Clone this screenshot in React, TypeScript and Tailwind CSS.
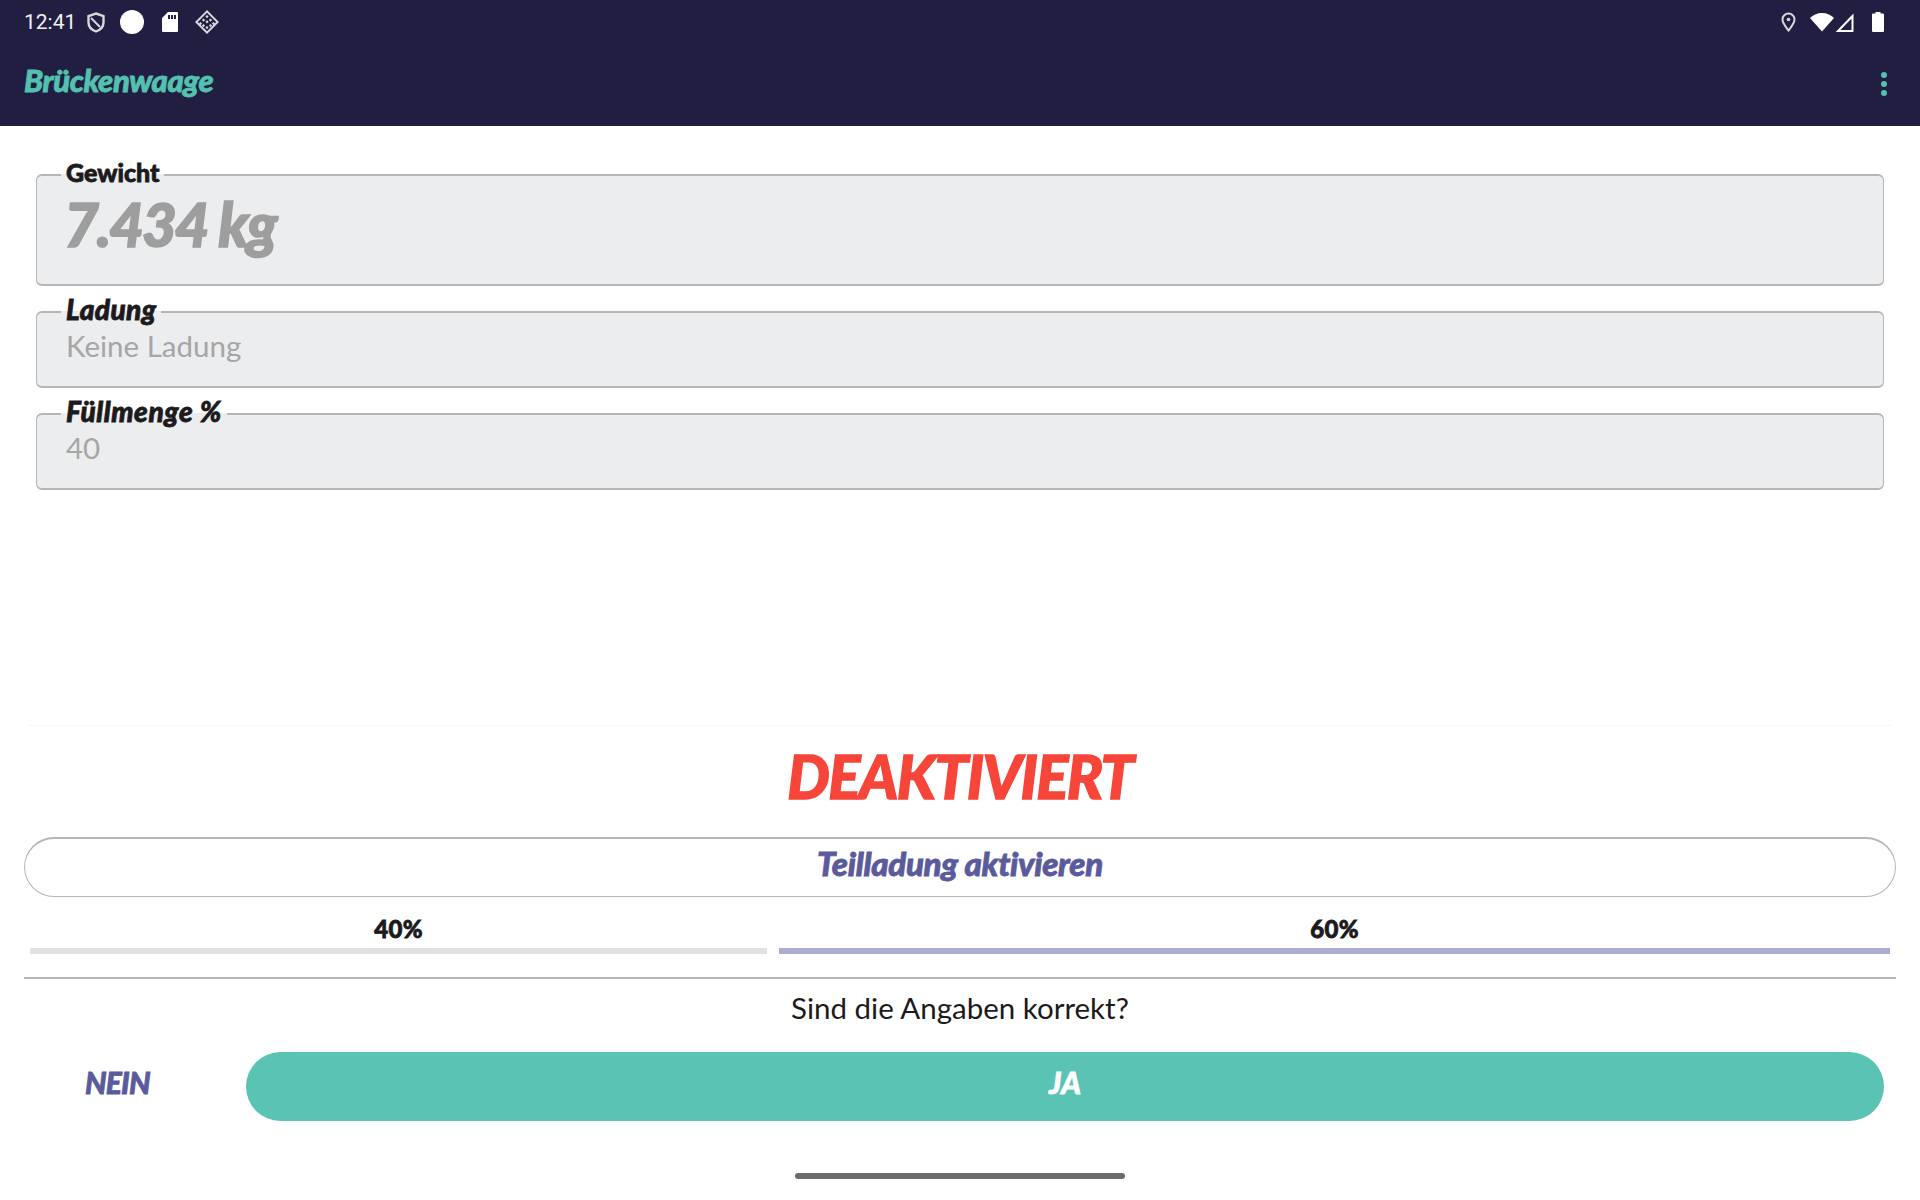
const lato = "font-['Lato','Liberation_Sans',sans-serif]";
const heavy = "[-webkit-text-stroke:0.8px_currentColor]";

function Field({ label, value, upright, big, h, labelSize }: { label: string; value: string; upright?: boolean; big?: boolean; h: string; labelSize: string }) {
  return (
    <fieldset className={`${h} rounded-md border-y-2 border-x-[1.5px] border-[#b6b6b6] bg-[#ecedef] px-[29px]`}>
      <legend className={`ml-[-5px] px-[5px] ${labelSize} font-black text-[#1c1a1c] ${heavy} ${upright ? "" : "italic"}`}>
        <span className="mb-[6px] block leading-[30px]">{label}</span>
      </legend>
      {big ? (
        <div className="ml-[-2px] mt-[-4px] text-[60px] leading-[70px] font-black italic tracking-[-2px] text-[#9e9e9e] [-webkit-text-stroke:1.6px_currentColor]">{value}</div>
      ) : (
        <div className="mt-[-4px] text-[29.5px] leading-[40px] text-[#a6a6a6]">{value}</div>
      )}
    </fieldset>
  );
}

function Icons() {
  return (
    <div className="flex h-[44px] items-center pl-[24px] pr-[36px] text-[#f0f0f0]">
      <span className="w-[63px] font-['Roboto',sans-serif] text-[21px] leading-none">12:41</span>
      <svg width="18" height="21" viewBox="0 0 18 21" fill="none" stroke="#d8d8dc" strokeWidth="2.4">
        <path d="M9 1.5 16.5 4v6.5c0 4.2-3.2 7.4-7.5 9-4.3-1.6-7.5-4.8-7.5-9V4z" />
        <path d="M4 6l9 9" strokeWidth="2" />
      </svg>
      <span className="ml-[15px] h-[24px] w-[24px] rounded-full bg-white" />
      <svg className="ml-[18px]" width="16" height="20" viewBox="0 0 16 20">
        <path fillRule="evenodd" fill="#fff" d="M6 0h9a1 1 0 0 1 1 1v18a1 1 0 0 1-1 1H1a1 1 0 0 1-1-1V6zM6 3v4h2V3zM9 3v4h2V3zM12 3v4h2V3z" />
      </svg>
      <svg className="ml-[17px]" width="24" height="24" viewBox="0 0 24 24" fill="#d8d8dc">
        <path fillRule="evenodd" d="M12 0 24 12 12 24 0 12zM12 2.8 2.8 12 12 21.2 21.2 12z" />
        <path d="M12 5l1.6 1.6L12 8.2l-1.6-1.6zM8.5 8.5l1.6 1.6-1.6 1.6-1.6-1.6zM15.5 8.5l1.6 1.6-1.6 1.6-1.6-1.6zM12 10.2l1.6 1.6-1.6 1.6-1.6-1.6zM5.5 12l1.6 1.6-1.6 1.6L4 13.6zM18.5 12l1.6 1.6-1.6 1.6-1.6-1.6zM8.5 14l1.6 1.6-1.6 1.6-1.6-1.6zM15.5 14l1.6 1.6-1.6 1.6-1.6-1.6zM12 16l1.6 1.6-1.6 1.6-1.6-1.6z" />
      </svg>
      <span className="flex-1" />
      <svg width="15" height="20" viewBox="0 0 15 20" fill="none" stroke="#d8d8dc" strokeWidth="2">
        <path d="M7.5 18.5C4 14 1.5 11 1.5 7.5a6 6 0 0 1 12 0c0 3.500-2.500 6.500-6 11z" />
        <circle cx="7.5" cy="7.5" r="1.800" fill="#d8d8dc" stroke="none" />
      </svg>
      <svg className="ml-[14px]" width="24" height="20" viewBox="0 0 24 20" fill="#fff">
        <path d="M12 19.500 0 6C3 3 7 1 12 1s9 2 12 5z" />
      </svg>
      <svg className="ml-[1px]" width="19" height="19" viewBox="0 0 19 19" fill="none" stroke="#fff" strokeWidth="2">
        <path d="M17.500 3v15H3z" />
      </svg>
      <svg className="ml-[18px]" width="12" height="20" viewBox="0 0 12 20" fill="#fff">
        <path d="M3.500 0h5v1.500H11a1 1 0 0 1 1 1V19a1 1 0 0 1-1 1H1a1 1 0 0 1-1-1V2.500a1 1 0 0 1 1-1h2.500z" />
      </svg>
    </div>
  );
}

export default function App() {
  return (
    <div className={`${lato} flex h-[1200px] w-[1920px] flex-col overflow-hidden bg-white`}>
      <header className="h-[126px] bg-[#211e42]">
        <Icons />
        <div className="flex h-[76px] items-center justify-between pl-[24px] pr-[36px]">
          <span className={`mt-[-4px] text-[31px] font-black italic tracking-[-0.4px] text-[#54c1b0] ${heavy}`}>Brückenwaage</span>
          <span className="mr-[-3px] mt-[3px] flex flex-col gap-[3px]">
            <i className="h-[6px] w-[6px] rounded-full bg-[#54c1b0]" />
            <i className="h-[6px] w-[6px] rounded-full bg-[#54c1b0]" />
            <i className="h-[6px] w-[6px] rounded-full bg-[#54c1b0]" />
          </span>
        </div>
      </header>

      <main className="flex flex-col gap-[8px] px-[36px] pt-[31px]">
        <Field label="Gewicht" value="7.434 kg" upright big h="h-[129px]" labelSize="text-[25px]" />
        <Field label="Ladung" value="Keine Ladung" h="h-[94px]" labelSize="text-[28px] tracking-[0.4px]" />
        <Field label="Füllmenge %" value="40" h="h-[94px]" labelSize="text-[28px] tracking-[0.6px]" />
      </main>

      <div className="mx-[28px] mt-[235px] h-px bg-[#f7f7f7]" />

      <div className="mt-[14px] text-center text-[60px] leading-[72px] font-black italic tracking-[-1.5px] text-[#f74539] [-webkit-text-stroke:1.4px_currentColor]">DEAKTIVIERT</div>

      <div className="mx-[24px] mt-[25px] flex h-[60px] items-center justify-center rounded-[30px] border border-t-2 border-[#b6b6b6]">
        <span className={`mt-[-8px] text-[33px] font-black italic tracking-[-0.3px] text-[#5a5a9c] ${heavy}`}>Teilladung aktivieren</span>
      </div>

      <div className="mx-[30px] mt-[17px] flex gap-[12px]">
        <div className="flex w-[737px] flex-col items-center">
          <span className={`text-[24px] leading-[30px] font-black tracking-[0.3px] text-[#1c1a1c] ${heavy}`}>40%</span>
          <span className="mt-[4px] h-[6px] w-full bg-[#e1e1e1]" />
        </div>
        <div className="flex flex-1 flex-col items-center">
          <span className={`text-[24px] leading-[30px] font-black tracking-[0.3px] text-[#1c1a1c] ${heavy}`}>60%</span>
          <span className="mt-[4px] h-[6px] w-full bg-[#adadce]" />
        </div>
      </div>

      <div className="mx-[24px] mt-[23px] h-[2px] bg-[#b6b6b6]" />

      <div className="mt-[9px] text-center text-[29.5px] leading-[40px] text-[#1c1a1c]">Sind die Angaben korrekt?</div>

      <div className="mt-[24px] flex items-center pr-[36px]">
        <div className={`w-[246px] pb-[8px] pl-[85px] text-[30px] font-black italic tracking-[-0.8px] text-[#5a5a9c] ${heavy}`}>NEIN</div>
        <div className={`flex h-[69px] flex-1 items-center justify-center rounded-[35px] bg-[#5bc3b4] pb-[8px] text-[30px] font-black italic text-white ${heavy}`}>JA</div>
      </div>

      <div className="mx-auto mt-[52px] h-[6px] w-[330px] rounded-full bg-[#6b6b6b]" />
    </div>
  );
}
